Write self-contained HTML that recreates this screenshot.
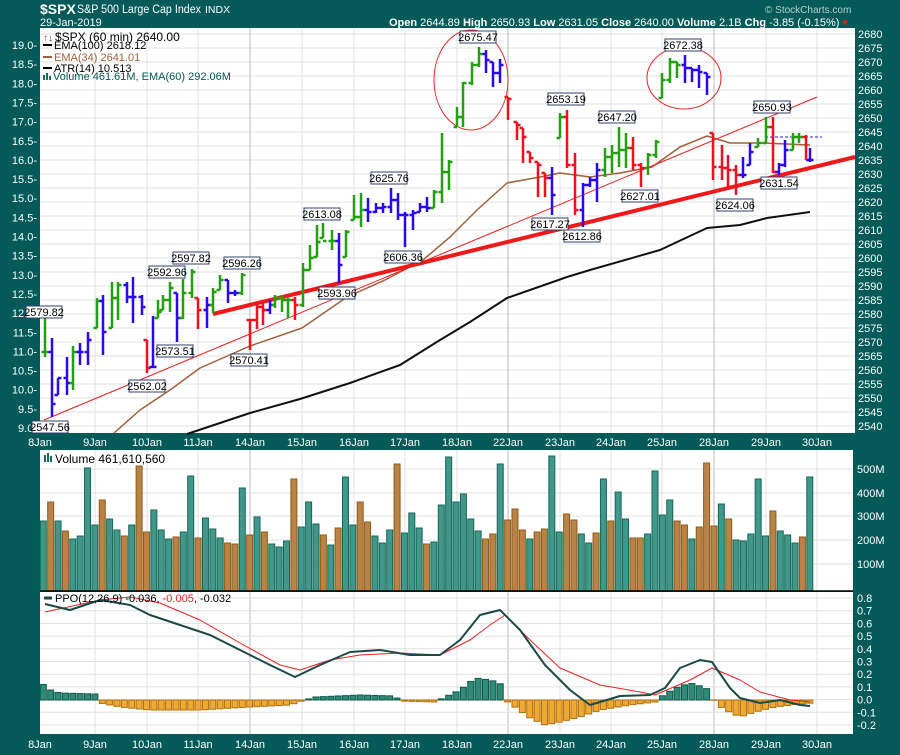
<!DOCTYPE html>
<html><head><meta charset="utf-8">
<style>
html,body{margin:0;padding:0;background:#035a58;}
body{width:900px;height:750px;overflow:hidden;font-family:"Liberation Sans",sans-serif;}
svg text{font-family:"Liberation Sans",sans-serif;}
</style></head><body>
<svg id="s" width="900" height="750" xmlns="http://www.w3.org/2000/svg">
<rect x="0" y="0" width="900" height="750" fill="#035a58"/>
<text x="40" y="14" font-size="14" font-weight="bold" fill="#fff">$SPX</text>
<text x="77" y="13" font-size="11.5" fill="#fff" textLength="124" lengthAdjust="spacingAndGlyphs">S&amp;P 500 Large Cap Index</text>
<text x="205" y="13" font-size="10.5" fill="#fff">INDX</text>
<text x="40" y="26" font-size="11" fill="#fff">29-Jan-2019</text>
<text x="765" y="13" font-size="10" fill="#b8cfcc">© StockCharts.com</text>
<text x="848" y="26" font-size="11" fill="#fff" text-anchor="end"><tspan font-weight="bold">Open</tspan> 2644.89  <tspan font-weight="bold">High</tspan> 2650.93  <tspan font-weight="bold">Low</tspan> 2631.05  <tspan font-weight="bold">Close</tspan> 2640.00  <tspan font-weight="bold">Volume</tspan> 2.1B  <tspan font-weight="bold">Chg</tspan> -3.85 (-0.15%) <tspan fill="#e02020">▾</tspan></text>
<g id="g"></g>
</svg>
<script>
var G=document.getElementById("g"),h="";
function L(x1,y1,x2,y2,c,w,e){h+='<line x1="'+x1+'" y1="'+y1+'" x2="'+x2+'" y2="'+y2+'" stroke="'+c+'" stroke-width="'+(w||1)+'" '+(e||'')+'/>';}
function R(x,y,w,hh,f,s,e){h+='<rect x="'+x+'" y="'+y+'" width="'+w+'" height="'+hh+'" fill="'+f+'" '+(s?'stroke="'+s+'"':'')+' '+(e||'')+'/>';}
function T(x,y,t,sz,c,a,e){h+='<text x="'+x+'" y="'+y+'" font-size="'+sz+'" fill="'+c+'" '+(a?'text-anchor="'+a+'"':'')+' '+(e||'')+'>'+t+'</text>';}
function P(pts,c,w){h+='<polyline fill="none" stroke="'+c+'" stroke-width="'+w+'" stroke-linejoin="round" points="'+pts.map(function(p){return p.join(',')}).join(' ')+'"/>';}
var days=[["8Jan",40],["9Jan",95],["10Jan",147],["11Jan",198],["14Jan",250],["15Jan",302],["16Jan",354],["17Jan",405],["18Jan",457],["22Jan",508],["23Jan",560],["24Jan",611],["25Jan",662],["28Jan",714],["29Jan",766],["30Jan",817]];
var dark={"14Jan":1,"22Jan":1,"28Jan":1};
R(40,28,815,405,"#fff");R(40,450,813,141,"#fff");R(40,592,813,142,"#fff");
for(var p=2680;p>=2540;p-=5){var y=34+(2680-p)*2.8;if(y<433){L(40,y,855,y,"#e0e0e0");T(858,y+4,p,11,"#fff");}}
for(var i=0;i<=20;i++){var y=45+i*19.15;if(y<433){T(37,y+4,(19-i*0.5).toFixed(1)+"-",11,"#fff","end");}}
days.forEach(function(d){var c=dark[d[0]]?"#bbb":"#e0e0e0";if(d[1]>40){L(d[1],28,d[1],433,c);L(d[1],450,d[1],591,c);L(d[1],592,d[1],734,c);}
 T(d[1],446,d[0],11,"#fff","middle");T(d[1],748,d[0],11,"#fff","middle");});
[[500,469],[400,493],[300,516],[200,540],[100,564]].forEach(function(v){L(40,v[1],853,v[1],"#e0e0e0");T(857,v[1]+4,v[0]+"M",11,"#fff");});
for(var i=0;i<=10;i++){var v=0.8-i*0.1,y=598+i*12.7;L(40,y,853,y,"#e0e0e0");T(857,y+4,(v<-0.001?"-":"")+Math.abs(v).toFixed(1),11,"#fff");}
P([[114,433],[140,410],[170,390],[200,368],[250,346],[302,328],[347,297],[385,280],[423,260],[450,237],[477,210],[507,183],[540,177],[560,173],[590,177],[620,173],[652,167],[680,147],[707,136],[730,143],[763,143],[810,145]],"#a0603a",1.5);
P([[187,434],[250,413],[300,399],[350,383],[400,365],[440,340],[470,322],[507,298],[567,277],[590,270],[660,250],[707,228],[740,225],[767,218],[810,212]],"#111",2);
L(44,420,817,97,"#f01818",1);
L(213,314,855,157,"#f01818",4);
L(765,137,822,137,"#2020e0",1,'stroke-dasharray="3,2"');
h+='<ellipse cx="471" cy="80" rx="37" ry="50" fill="none" stroke="#f02020" stroke-width="1"/>';
h+='<ellipse cx="684" cy="78" rx="37" ry="31" fill="none" stroke="#f02020" stroke-width="1"/>';
var B=[[45,308,357,352,'g'],[52,338,417,404,'b'],[58,378,395,378,'b'],[67,357,395,383,'b'],[73,346,390,352,'g'],[80,343,365,352,'b'],[88,332,365,340,'b'],
[97,298,328,301,'g'],[103,295,355,332,'b'],[112,282,328,298,'g'],[118,282,320,285,'g'],[127,282,303,297,'b'],[133,277,323,297,'b'],[142,295,315,307,'b'],
[147,340,373,368,'r'],[153,316,367,367,'b'],[158,300,318,312,'g'],[163,295,310,300,'g'],[170,282,312,288,'g'],[177,293,342,318,'b'],[183,279,319,293,'g'],[192,269,298,272,'g'],
[198,298,329,310,'r'],[207,297,328,305,'b'],[213,288,313,292,'g'],[220,275,290,280,'g'],[228,280,303,293,'b'],[235,290,296,293,'b'],[242,273,295,275,'g'],
[250,320,350,320,'r'],[257,302,329,307,'r'],[263,302,325,310,'r'],[270,300,314,305,'b'],[275,295,308,298,'g'],[282,295,312,300,'g'],[288,298,318,300,'g'],
[295,297,320,305,'r'],[303,263,307,270,'g'],[310,245,270,258,'g'],[317,225,257,242,'g'],[323,223,238,241,'g'],[332,230,250,241,'g'],[339,233,283,265,'b'],
[346,230,257,232,'g'],[354,195,220,217,'g'],[361,193,227,210,'g'],[368,198,222,212,'b'],[376,203,213,208,'b'],[383,203,213,207,'b'],[391,188,213,200,'b'],
[398,193,220,215,'b'],[405,212,247,215,'b'],[413,210,230,213,'b'],[420,203,212,207,'b'],[427,197,212,208,'b'],[434,190,208,192,'g'],[442,133,203,172,'g'],
[449,160,190,162,'g'],[457,107,127,117,'g'],[463,82,127,83,'g'],[472,62,85,65,'g'],[479,47,67,54,'g'],[486,50,73,60,'b'],[493,62,87,73,'b'],[500,59,83,65,'b'],
[508,97,120,99,'r'],[517,122,140,125,'r'],[523,128,163,137,'r'],[530,152,163,158,'r'],[538,162,197,165,'r'],[545,173,197,178,'r'],[552,167,215,195,'b'],
[560,113,138,117,'g'],[567,110,168,165,'r'],[575,153,215,210,'r'],[583,183,227,185,'b'],[590,177,187,180,'b'],[597,163,202,170,'b'],[605,148,177,157,'g'],
[612,145,173,153,'g'],[619,127,167,150,'g'],[626,133,168,148,'g'],[633,137,170,165,'r'],[641,163,187,168,'r'],[648,153,175,155,'g'],[656,140,158,142,'g'],
[662,73,98,80,'g'],[670,58,83,62,'g'],[677,62,78,65,'g'],[685,55,83,68,'b'],[692,68,82,70,'b'],[699,65,88,72,'b'],[707,73,95,77,'b'],
[713,133,180,167,'r'],[722,145,180,168,'r'],[728,155,190,170,'r'],[736,165,195,175,'r'],[743,157,178,175,'b'],[750,143,165,152,'b'],[758,138,147,143,'g'],
[766,117,143,127,'g'],[773,117,173,172,'r'],[779,163,175,165,'b'],[785,140,167,150,'b'],[793,133,150,137,'g'],[799,133,143,137,'g'],[806,135,160,160,'r'],[810,148,162,160,'b']];
var col={g:"#22a010",b:"#2a08f0",r:"#f01020"};var prev=352;
B.forEach(function(b){var c=col[b[4]];L(b[0],b[1],b[0],b[2],c,2.5);var o=Math.min(Math.max(prev,b[1]),b[2]);L(b[0]-3.5,o,b[0],o,c,2.5);L(b[0],b[3],b[0]+3.5,b[3],c,2.5);prev=b[3];});
var LB=[["2579.82",44,312],["2547.56",50,427],["2592.96",167,272],["2597.82",191,258],["2596.26",242,263],["2573.51",175,351],["2562.02",147,386],["2570.41",249,360],["2613.08",322,214],["2625.76",389,178],["2593.96",337,293],["2606.36",403,257],["2675.47",478,37],["2653.19",566,99],["2617.27",550,224],["2612.86",582,236],["2647.20",617,117],["2627.01",640,196],["2672.38",683,45],["2650.93",772,107],["2624.06",735,205],["2631.54",779,183]];
LB.forEach(function(l){R(l[1]-18,l[2]-6,36,12,"#fff","#34406a",'stroke-width="1"');T(l[1],l[2]+4,l[0],11,"#000","middle");});
T(55,41,"$SPX (60 min) 2640.00",12,"#000");h+='<text x="43" y="41" font-size="10" fill="#e02020">↑<tspan fill="#2020e0">↓</tspan></text>';
L(43,45,52,45,"#000",2);T(54,49,"EMA(100) 2618.12",11,"#000");
L(43,57,52,57,"#a0603a",2);T(54,61,"EMA(34) 2641.01",11,"#a0603a");
L(43,68,52,68,"#000",2);T(54,72,"ATR(14) 10.513",11,"#000");
R(43,75,2,5,"#1a6e60");R(46,73,2,7,"#1a6e60");R(49,76,2,4,"#1a6e60");T(53,80,"Volume 461.61M, EMA(60) 292.06M",11,"#035a58");
var V=[[70,'t'],[89,'o'],[70,'t'],[60,'o'],[52,'t'],[55,'t'],[123,'t'],[66,'t'],[91,'o'],[72,'t'],[61,'t'],[55,'o'],[66,'t'],[125,'o'],[59,'o'],[81,'t'],[61,'t'],[52,'t'],[54,'o'],[59,'t'],[115,'t'],[53,'o'],[73,'t'],[62,'t'],[53,'t'],[48,'o'],[47,'o'],[103,'t'],[56,'o'],[74,'t'],[59,'o'],[47,'t'],[44,'t'],[50,'t'],[112,'o'],[64,'t'],
[89,'t'],[67,'t'],[56,'o'],[46,'t'],[63,'o'],[114,'t'],[66,'t'],[89,'o'],[69,'o'],[55,'t'],[48,'t'],[61,'t'],[127,'o'],[58,'t'],[78,'t'],[63,'t'],[47,'o'],[49,'t'],[86,'t'],[134,'t'],[89,'t'],[97,'t'],[72,'t'],[60,'t'],[52,'o'],[57,'o'],[127,'t'],[71,'o'],[82,'o'],[61,'o'],[52,'t'],[59,'o'],[62,'o'],[135,'t'],[59,'t'],[77,'o'],[71,'o'],[57,'t'],[48,'t'],[58,'o'],
[112,'t'],[70,'o'],[99,'t'],[72,'t'],[53,'o'],[53,'o'],[57,'t'],[120,'t'],[76,'t'],[91,'t'],[70,'o'],[66,'o'],[52,'t'],[64,'o'],[128,'o'],[65,'o'],[87,'t'],[72,'o'],[51,'t'],[50,'t'],[57,'t'],[112,'t'],[55,'t'],[80,'o'],[60,'t'],[56,'t'],[48,'t'],[54,'o'],[114,'t']];
V.forEach(function(v,i){var x=43.3+i*7.37;R(x-3,591-v[0],6,v[0],v[1]=='t'?"#43968a":"#b6844a",v[1]=='t'?"#106a58":"#955a10",'stroke-width="1"');});
L(40,591,853,591,"#000",1.5);
R(44,455,2,7,"#1a6e60");R(47,453,2,9,"#1a6e60");R(50,456,2,6,"#1a6e60");T(55,463,"Volume 461,610,560",12,"#000");
var PP=[[45,604],[70,610],[100,600],[130,605],[150,615],[180,625],[210,635],[240,650],[270,665],[295,677],[320,665],[350,652],[380,650],[410,655],[440,655],[460,640],[480,615],[500,610],[520,630],[545,665],[570,690],[590,705],[620,696],[650,695],[665,688],[680,668],[700,660],[712,662],[730,688],[740,698],[760,703],[780,700],[800,705],[810,706]];
var SG=[[45,612],[100,600],[130,597],[160,603],[200,620],[240,643],[280,665],[300,670],[330,660],[360,655],[400,653],[440,655],[470,640],[490,625],[505,615],[530,640],[560,668],[600,685],[640,692],[655,695],[690,680],[712,668],[740,680],[760,692],[790,700],[810,702]];
var HS=[[44,15],[52,9],[60,7],[95,6],[100,-3],[120,-7],[150,-10],[200,-10],[250,-7],[290,-5],[305,0],[315,3],[360,5],[395,4],[400,-1],[435,-2],[445,3],[460,10],[475,22],[490,20],[500,17],[505,0],[512,-5],[530,-18],[545,-25],[560,-22],[580,-17],[600,-10],[630,-5],[655,-2],[662,4],[675,12],[690,17],[700,14],[710,10],[715,-3],[725,-10],[740,-17],[755,-12],[775,-7],[800,-4],[812,-3]];
function iy(a,x){for(var i=1;i<a.length;i++){if(x<=a[i][0]){var t=(x-a[i-1][0])/(a[i][0]-a[i-1][0]);return a[i-1][1]+t*(a[i][1]-a[i-1][1]);}}return a[a.length-1][1];}
for(var i=0;i<105;i++){var x=43.3+i*7.37;var d=iy(HS,x);if(d>=0)R(x-3,700-d,6,d,"#2f8a78","#0f5a4a");else R(x-3,700,6,-d,"#f0a830","#b07010");}
P(SG,"#f02020",1);P(PP,"#1a4a48",2);
L(44,598,52,598,"#1a4a48",3);T(55,602,"PPO(12,26,9) -0.036, <tspan fill=\"#f02020\">-0.005</tspan>, -0.032",11,"#000");
G.innerHTML=h;
</script>
</body></html>
